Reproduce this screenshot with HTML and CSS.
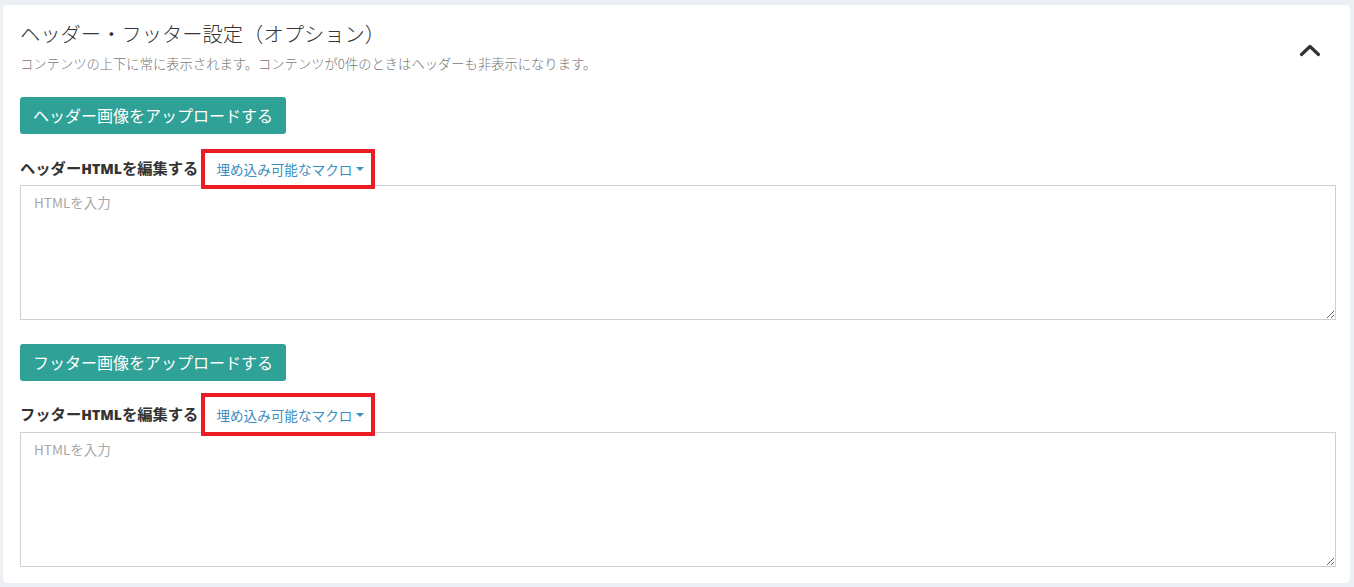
FILE: index.html
```html
<!DOCTYPE html>
<html lang="ja">
<head>
<meta charset="utf-8">
<link rel="stylesheet" href="styles.css">
</head>
<body>
<div class="card">
  <div class="head">
    <div class="head-text">
      <h2 class="title">ヘッダー・フッター設定（オプション）</h2>
      <p class="sub">コンテンツの上下に常に表示されます。コンテンツが0件のときはヘッダーも非表示になります。</p>
    </div>
    <svg class="chev" width="22" height="14" viewBox="0 0 22 14"><path d="M2.5 11.5 L11 3.5 L19.5 11.5" fill="none" stroke="#333" stroke-width="3.2" stroke-linecap="round" stroke-linejoin="round"/></svg>
  </div>

  <button class="btn">ヘッダー画像をアップロードする</button>
  <div class="label-row">
    <span class="label">ヘッダー<b class="latin">HTML</b>を編集する</span>
    <span class="macro">埋め込み可能なマクロ<span class="caret"></span></span>
  </div>
  <textarea class="ta" placeholder="HTMLを入力"></textarea>

  <button class="btn btn2">フッター画像をアップロードする</button>
  <div class="label-row row2">
    <span class="label">フッター<b class="latin">HTML</b>を編集する</span>
    <span class="macro">埋め込み可能なマクロ<span class="caret"></span></span>
  </div>
  <textarea class="ta" placeholder="HTMLを入力"></textarea>
</div>
</body>
</html>
```

FILE: styles.css
```css
html, body {
  margin: 0;
  padding: 0;
}
body {
  background: #eceff3;
  font-family: "Noto Sans CJK JP", "Noto Sans", sans-serif;
  color: #333;
  padding: 5px 4px 5px 3px;
}
.card {
  background: #fff;
  border-radius: 4px;
  padding: 14px 14px 16px 17px;
  display: flex;
  flex-direction: column;
  align-items: flex-start;
}
.head {
  display: flex;
  justify-content: space-between;
  align-items: flex-start;
  width: 100%;
}
.title {
  margin: 0;
  font-size: 20.3px;
  font-weight: 300;
  line-height: 28px;
  color: #333;
}
.sub {
  margin: 7px 0 0;
  font-size: 13.3px;
  font-weight: 300;
  line-height: 20px;
  color: #777;
}
.chev {
  margin: 24px 15px 0 0;
}
.btn {
  margin-top: 23px;
  background: #2fa197;
  color: #fff;
  border: none;
  border-radius: 3px;
  font-family: inherit;
  font-size: 16px;
  line-height: 21px;
  padding: 8px 13px;
}
.btn2 {
  margin-top: 24px;
}
.label-row {
  display: flex;
  align-items: center;
  margin-top: 19px;
}
.row2 {
  margin-top: 16px;
}
.label {
  font-size: 15.3px;
  font-weight: 700;
  color: #333;
  position: relative;
  top: -2px;
}
.latin {
  font-family: "Open Sans", "Noto Sans", sans-serif;
  font-size: 14px;
}
.macro {
  position: relative;
  z-index: 1;
  margin-left: 7px;
  display: inline-flex;
  align-items: center;
  height: 32px;
  width: 166px;
  box-sizing: border-box;
  padding-left: 11px;
  font-size: 13.6px;
  color: #3b8dc3;
  outline: 4px solid #ec1c24;
}
.row2 .macro {
  height: 35px;
}
.caret {
  width: 0;
  height: 0;
  border-left: 4.5px solid transparent;
  border-right: 4.5px solid transparent;
  border-top: 4.5px solid #3b8dc3;
  margin-left: 4px;
}
.ta {
  display: block;
  width: 100%;
  height: 135px;
  box-sizing: border-box;
  border: 1px solid #cfcfd6;
  border-radius: 0;
  padding: 6px 13px;
  font-family: "Noto Sans CJK JP", sans-serif;
  font-size: 13.5px;
  margin: 0;
  resize: vertical;
}
.ta::placeholder {
  color: #a8a8a8;
}
```
